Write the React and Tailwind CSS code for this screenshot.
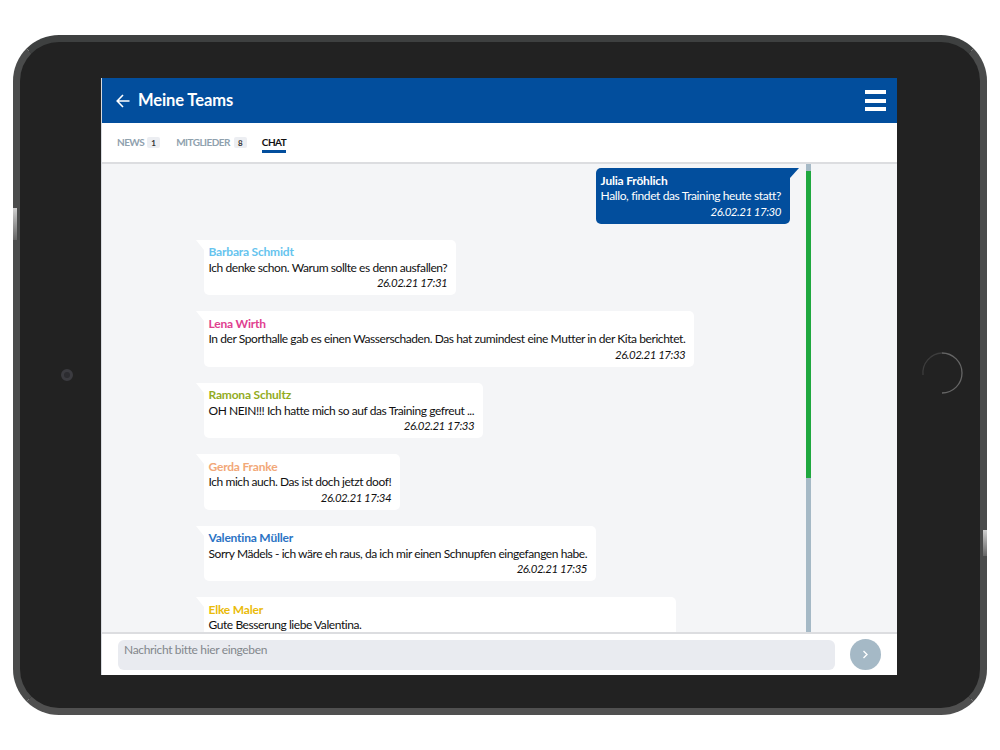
import React from "react";

function Bubble({ name, color, text, time, extra }) {
  return (
    <div className="relative self-start ml-[102px] shrink-0">
      <svg className="absolute left-[-8px] top-0" width="8" height="10" viewBox="0 0 8 10"><path d="M0 0H8V10Z" fill="#fff" /></svg>
      <div className="bg-white rounded-b-[5px] rounded-tr-[5px] pt-[4.5px] pb-[4.5px] pl-[4.5px] pr-[9px] text-[12px] leading-[15.5px] tracking-[-0.43px] text-[#111]">
        <div className={`font-bold tracking-[-0.2px] ${color}`}>{name}</div>
        <div>{text}</div>
        {time && <div className="text-right italic text-[11.5px] tracking-[-0.48px]">{time}</div>}
        {extra}
      </div>
    </div>
  );
}

export default function App() {
  return (
    <div className="w-[1000px] h-[750px] bg-white pt-[35px] px-[13px] overflow-hidden font-['Lato','Liberation_Sans',sans-serif]">
      <div className="w-[974px] h-[680px] rounded-[46px] border-[7px] border-t-[#3e4040] border-x-[#4a4b4b] border-b-[#505050] bg-[#222222] pl-[81px] pr-[83px] pt-[36px] pb-[33px] relative">
        <div className="absolute left-[-7px] top-[166px] w-[4px] h-[32px] bg-gradient-to-b from-[#d0d0d0] to-[#666]" />
        <div className="absolute right-[-7px] top-[488px] w-[4px] h-[26px] bg-gradient-to-b from-[#d0d0d0] to-[#666]" />
        <div className="absolute left-[41px] top-[327px] w-[12px] h-[12px] rounded-full bg-[#2c2c30] border-[3px] border-[#3b3b40]" />
        <svg className="absolute left-[900px] top-[309px]" width="44" height="44" viewBox="0 0 44 44" fill="none">
          <path d="M22 2A20 20 0 0 1 22 42" stroke="#666" strokeWidth="1.3" />
          <path d="M3 24A20 20 0 0 1 22 2" stroke="#3d3d3d" strokeWidth="1.3" />
        </svg>
        <div className="h-full flex flex-col bg-white border-l border-[#d8dbe0]">
          <div className="h-[45px] shrink-0 bg-[#024e9d] flex items-center pl-[14px] pr-[11px] text-white">
            <svg width="14" height="14" viewBox="0 0 14 14" fill="none" stroke="#fff" strokeWidth="1.6"><path d="M13.5 7H1.2M7 1 1.2 7 7 13" /></svg>
            <span className="ml-[8px] text-[16.5px] font-bold tracking-[-0.1px]">Meine Teams</span>
            <div className="ml-auto w-[21px] flex flex-col gap-[4.5px]">
              <div className="h-[4px] bg-white" />
              <div className="h-[4px] bg-white" />
              <div className="h-[4px] bg-white" />
            </div>
          </div>
          <div className="h-[41px] shrink-0 border-b-2 border-[#dcdde0] flex items-center pl-[15px] text-[10px] tracking-[-0.55px] font-bold text-[#8fa1ae]">
            <span>NEWS</span>
            <span className="ml-[3px] w-[13px] h-[11px] bg-[#eceef2] rounded-[2px] text-[8px] tracking-normal text-[#333] flex items-center justify-center">1</span>
            <span className="ml-[16px]">MITGLIEDER</span>
            <span className="ml-[4px] w-[13px] h-[11px] bg-[#eceef2] rounded-[2px] text-[8px] tracking-normal text-[#333] flex items-center justify-center">8</span>
            <span className="ml-[15px] text-[#111] border-b-[3px] border-[#024e9d] pt-[3px] pb-[1px] leading-[14px]">CHAT</span>
          </div>
          <div className="flex-1 min-h-0 bg-[#f4f5f7] overflow-hidden relative flex flex-col gap-[16px] pt-[4px]">
            <div className="relative self-end mr-[107px] shrink-0">
              <svg className="absolute right-[-9px] top-0" width="9" height="10" viewBox="0 0 9 10"><path d="M9 0H0V10Z" fill="#024e9d" /></svg>
              <div className="bg-[#024e9d] rounded-b-[5px] rounded-tl-[5px] pt-[4.5px] pb-[4.5px] pl-[5px] pr-[9px] text-[12px] leading-[15.5px] tracking-[-0.38px] text-white">
                <div className="font-bold tracking-[-0.2px]">Julia Fröhlich</div>
                <div>Hallo, findet das Training heute statt?</div>
                <div className="text-right italic text-[11.5px] tracking-[-0.48px]">26.02.21 17:30</div>
              </div>
            </div>
            <Bubble name="Barbara Schmidt" color="text-[#66c4ee]" text="Ich denke schon. Warum sollte es denn ausfallen?" time="26.02.21 17:31" />
            <Bubble name="Lena Wirth" color="text-[#e0408f]" text="In der Sporthalle gab es einen Wasserschaden. Das hat zumindest eine Mutter in der Kita berichtet." time="26.02.21 17:33" />
            <Bubble name="Ramona Schultz" color="text-[#93ac1e]" text="OH NEIN!!! Ich hatte mich so auf das Training gefreut ..." time="26.02.21 17:33" />
            <Bubble name="Gerda Franke" color="text-[#f2a878]" text="Ich mich auch. Das ist doch jetzt doof!" time="26.02.21 17:34" />
            <Bubble name="Valentina Müller" color="text-[#2b73c4]" text="Sorry Mädels - ich wäre eh raus, da ich mir einen Schnupfen eingefangen habe." time="26.02.21 17:35" />
            <Bubble name="Elke Maler" color="text-[#eabb0a]" text="Gute Besserung liebe Valentina." extra={<div className="w-[458px] h-[20px]" />} />
            <div className="absolute left-[704px] top-0 bottom-0 w-[4.5px] bg-[#a5b9c6]">
              <div className="mt-[7px] h-[307px] bg-[#1fa83f]" />
            </div>
          </div>
          <div className="h-[43px] shrink-0 border-t-2 border-[#dcdde0] flex items-center pl-[16px] pr-[16px] pb-[1px]">
            <div className="flex-1 h-[30px] mt-[1px] rounded-[6px] bg-[#e9ebf0] pl-[6px] pt-[2px] text-[12px] tracking-[-0.35px] leading-[16px] text-[#83878c]">Nachricht bitte hier eingeben</div>
            <div className="ml-[15px] w-[31px] h-[31px] rounded-full bg-[#a5b9c6] flex items-center justify-center">
              <svg width="7" height="9" viewBox="0 0 7 9" fill="none" stroke="#fff" strokeWidth="1.4"><path d="M1.5 1 5 4.5 1.5 8" /></svg>
            </div>
          </div>
        </div>
      </div>
    </div>
  );
}
